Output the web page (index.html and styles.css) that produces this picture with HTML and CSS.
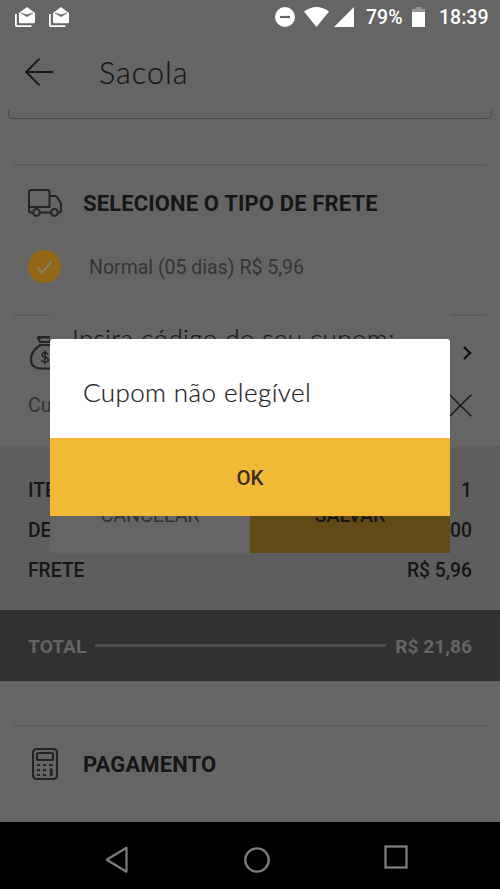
FILE: index.html
```html
<!DOCTYPE html>
<html lang="pt-BR">
<head>
<meta charset="utf-8">
<title>Sacola</title>
<link rel="stylesheet" href="styles.css">
</head>
<body>
<div class="screen">
  <div class="status">
    <svg class="mail" width="20" height="20" viewBox="0 0 20 20"><path d="M0 7v11.200q0 1.800 1.800 1.800H16.500v-1.800H1.800V7z" fill="#fff"/><path d="M4 6L12 0l8 6v9q0 1.200-1.200 1.200H5.200Q4 16.200 4 15z" fill="#fff"/><path d="M6 6l6 1.800L18 6l-6 3.800z" fill="#656565" stroke="#656565" stroke-width=".5"/></svg>
    <svg class="mail" width="20" height="20" viewBox="0 0 20 20"><path d="M0 7v11.200q0 1.800 1.800 1.800H16.500v-1.800H1.800V7z" fill="#fff"/><path d="M4 6L12 0l8 6v9q0 1.200-1.200 1.200H5.200Q4 16.200 4 15z" fill="#fff"/><path d="M6 6l6 1.800L18 6l-6 3.800z" fill="#656565" stroke="#656565" stroke-width=".5"/></svg>
    <svg class="dnd" width="20" height="20" viewBox="0 0 20 20"><circle cx="10" cy="10" r="10" fill="#fff"/><path d="M5 10h10" stroke="#656565" stroke-width="2.200"/></svg>
    <svg class="wifi" width="25" height="20" viewBox="0 0 25 20"><path d="M0 4.500Q12.500-4.500 25 4.500L12.500 20z" fill="#fff"/></svg>
    <svg class="signal" width="20" height="20" viewBox="0 0 20 20"><path d="M20 0v20H0z" fill="#fff"/></svg>
    <span class="percent">79%</span>
    <svg class="battery" width="13" height="20" viewBox="0 0 13 20"><path d="M0 6V2h3.500V0h6v2H13v4z" fill="#969696"/><path d="M0 5h13v15H0z" fill="#fff"/></svg>
    <span class="clock">18:39</span>
  </div>
  <header class="header">
    <svg width="28" height="28" viewBox="0 0 28 28" fill="none" stroke="#171717" stroke-width="1.900"><path d="M14.500.7L1.200 14l13.300 13.300M1.200 14H28"/></svg>
    <h1 class="title">Sacola</h1>
  </header>
  <div class="field"></div>

  <section class="shipping">
    <h2 class="heading">
      <svg class="icon" width="34" height="28" viewBox="0 0 34 28" fill="none" stroke="#242424" stroke-width="2"><path d="M4.500 23.500H3Q1 23.500 1 21.500V3Q1 1 3 1h16.500q2 0 2 2v15H1M12 23.500h10.500M21.500 7h5q2 0 3.200 2l3.300 5.500v7q0 2-2 2h-.5"/><circle cx="8.500" cy="23.500" r="3.400"/><circle cx="26.500" cy="23.500" r="3.400"/></svg>
      Selecione o tipo de frete
    </h2>
    <div class="option">
      <svg width="33" height="33" viewBox="0 0 33 33"><circle cx="16.500" cy="16.500" r="16.500" fill="#936715"/><path d="M9.500 17l4.500 6L23.500 11" fill="none" stroke="#858176" stroke-width="2"/></svg>
      <span>Normal (05 dias) R$ 5,96</span>
    </div>
  </section>

  <section class="coupon">
    <div class="coupon-row">
      <svg class="bag" width="32" height="34" viewBox="0 0 32 34" fill="none" stroke="#242424" stroke-width="2.200"><path d="M10 6L8 1.500q2-1 4 .2 2.500-1.700 4.500 0 2-1.200 5-.2L19.500 6zM9.500 9h10.500M10.500 9Q1 15 1 23.500 1 32.500 11 32.500h10q8-1 8-9Q29 15 19.500 9"/><path d="M18 18.500q-1-2-3.300-1.800-2.700.2-2.700 2.200 0 1.700 3 2.300 3.300.6 3.300 2.700 0 2.200-3 2.400-2.600 0-3.600-2.200M15 14.300v14.200" stroke-width="1.500"/></svg>
      <svg class="chevron" width="9" height="14" viewBox="0 0 9 14"><path d="M1 1l6 6-6 6" fill="none" stroke="#111" stroke-width="2.300"/></svg>
    </div>
    <div class="coupon-row code">
      <span>Cupom</span>
      <svg width="23" height="23" viewBox="0 0 23 23"><path d="M.7.7l21.600 21.600M22.300.7L.7 22.300" stroke="#1b1b1b" stroke-width="1.500"/></svg>
    </div>
  </section>

  <section class="summary">
    <div class="line"><span>ITENS</span><span>1</span></div>
    <div class="line"><span>DESC.</span><span>R$ 0,00</span></div>
    <div class="line"><span>FRETE</span><span>R$ 5,96</span></div>
  </section>
  <div class="total"><span>TOTAL</span><i class="rule"></i><span>R$ 21,86</span></div>

  <section class="payment">
    <h2 class="heading">
      <svg class="icon calc" width="26" height="32" viewBox="0 0 26 32" fill="none" stroke="#242424" stroke-width="2.100"><rect x="1" y="1" width="24" height="30" rx="3.500"/><rect x="5" y="5" width="16" height="7" rx="1.500"/><path d="M5 17h3m3 0h3m3 0h4M5 22h3m3 0h3M5 27h3m3 0h3"/><path d="M19.200 20.500V28" stroke-width="3"/></svg>
      Pagamento
    </h2>
  </section>

  <nav class="nav">
    <svg width="24" height="28" viewBox="0 0 24 28"><path d="M21.500 1.700v24L1.700 13.700z" fill="none" stroke="#7e7e7e" stroke-width="2.200" stroke-linejoin="round"/></svg>
    <svg width="26" height="26" viewBox="0 0 26 26"><circle cx="13" cy="13" r="11.700" fill="none" stroke="#7e7e7e" stroke-width="2.300"/></svg>
    <svg class="recent" width="24" height="24" viewBox="0 0 24 24"><rect x="1.500" y="1.500" width="21" height="21" fill="none" stroke="#7e7e7e" stroke-width="2.300"/></svg>
  </nav>

  <div class="prompt">
    <p class="prompt-text">Insira código do seu cupom:</p>
    <div class="prompt-actions"><span class="cancel">CANCELAR</span><span class="save">SALVAR</span></div>
  </div>
  <div class="alert">
    <p class="alert-text">Cupom não elegível</p>
    <div class="ok">OK</div>
  </div>
</div>
</body>
</html>
```
FILE: styles.css
```css
* { box-sizing: border-box; }
body { margin: 0; background: #656565; font-family: Roboto, sans-serif; color: #161616; }
svg { display: block; flex: none; }
h1, h2, p { margin: 0; }
.screen { position: relative; width: 500px; height: 889px; overflow: hidden; display: flex; flex-direction: column; }
.screen > * { flex: none; }
.status { height: 34px; display: flex; align-items: center; padding: 0 11px 0 15px; color: #fff; font-size: 19.5px; font-weight: 500; white-space: nowrap; }
.mail { margin: -1px 14px 0 0; }
.dnd { margin-left: auto; }
.wifi { margin-left: 9px; }
.signal { margin-left: 5px; }
.percent { margin-left: 12px; width: 36px; }
.battery { margin-left: 10px; }
.clock { margin-left: 14px; width: 50px; }
.header { height: 76px; display: flex; align-items: center; gap: 46px; padding-left: 25px; }
.title { font: 300 30.5px/40px Lato, sans-serif; letter-spacing: 1px; -webkit-text-stroke: .2px; }
.field { height: 9px; margin: 0 8px; border: 1px solid #474747; border-top: 0; border-radius: 0 0 5px 5px; }
.shipping, .coupon, .payment { position: relative; margin: 0 14px; border-top: 2px solid #5b5b5b; }
.shipping { margin-top: 45px; height: 150px; }
.heading { display: flex; align-items: center; height: 40px; margin: 17px 0 0 14px; gap: 21px; font-size: 22px; font-weight: 700; letter-spacing: .13px; text-transform: uppercase; white-space: nowrap; }
.option { display: flex; align-items: center; gap: 28px; margin: 27px 0 0 14px; color: #343434; font-size: 19.5px; }
.option span { padding-top: 2px; }
.coupon { height: 133px; padding: 17px 14px 0; }
.coupon-row { height: 40px; display: flex; align-items: center; justify-content: space-between; }
.bag { margin-left: 2px; }
.code { margin-top: 12px; color: #343434; font-size: 19.5px; }
.summary { height: 163px; padding: 23px 28px 0; background: #5e5e5e; }
.line { height: 40px; display: flex; align-items: center; justify-content: space-between; font-size: 19.3px; font-weight: 500; }
.total { height: 71px; padding: 1px 28px 0; display: flex; align-items: center; gap: 9px; background: #313131; color: #656565; font-size: 19.2px; font-weight: 700; }
.rule { flex: 1; height: 3px; margin-top: -2px; background: #4b4b4b; }
.payment { margin-top: 44px; height: 97px; }
.calc { margin: 0 4px; }
.nav { height: 67px; background: #000; display: flex; align-items: center; padding: 8px 92px 0 105px; justify-content: space-between; }
.recent { margin-top: -6px; }
.prompt { position: absolute; left: 50px; top: 311px; width: 400px; height: 242px; display: flex; flex-direction: column; justify-content: space-between; background: #656565; }
.prompt-text { padding: 9px 0 0 22px; font: 300 26px/36px Lato, sans-serif; letter-spacing: .4px; white-space: nowrap; -webkit-text-stroke: .2px; }
.prompt-actions { display: flex; height: 76px; line-height: 78px; text-align: center; font-size: 19.6px; }
.cancel, .save { flex: 1; height: 76px; }
.cancel { color: #303030; }
.save { background: #614a16; font-weight: 500; }
.alert { position: absolute; left: 50px; top: 339px; width: 400px; height: 177px; border-radius: 3px 3px 0 0; background: #fff; }
.alert-text { height: 99px; padding: 36px 0 0 33px; font: 300 26px/34px Lato, sans-serif; letter-spacing: .4px; color: #222; white-space: nowrap; -webkit-text-stroke: .2px; }
.ok { height: 78px; line-height: 80px; background: #f2b937; color: #3b2d24; text-align: center; font-size: 20.5px; font-weight: 500; }
```
